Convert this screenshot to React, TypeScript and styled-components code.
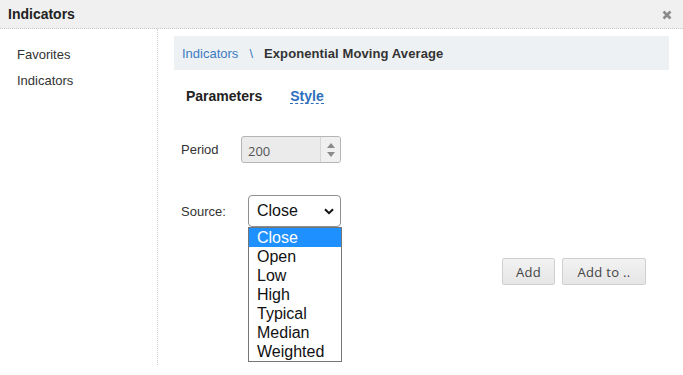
import React from "react";
import styled, { createGlobalStyle } from "styled-components";

const Global = createGlobalStyle`
  html, body { margin: 0; padding: 0; background: #fff; }
  body { font-family: "Liberation Sans", Arial, sans-serif; color: #333; }
`;

const Dialog = styled.div`
  width: 683px;
  height: 375px;
  background: #fff;
  display: flex;
  flex-direction: column;
  overflow: hidden;
`;

const Header = styled.div`
  height: 29px;
  box-sizing: border-box;
  background: #f0f0f0;
  border-bottom: 1px dotted #c8c8c8;
  display: flex;
  align-items: center;
  justify-content: space-between;
  padding: 0 11px 0 8px;
`;

const Title = styled.div`
  font-size: 14px;
  font-weight: bold;
  color: #222;
`;

const CloseBtn = styled.svg`
  width: 10px;
  height: 10px;
  margin-top: 1px;
`;

const Body = styled.div`
  flex: 1;
  display: flex;
`;

const Sidebar = styled.div`
  width: 158px;
  box-sizing: border-box;
  border-right: 1px dotted #cfcfcf;
  padding: 18px 0 0 17px;
  margin-bottom: 10px;
  display: flex;
  flex-direction: column;
  gap: 11px;
`;

const NavItem = styled.div`
  font-size: 13px;
  line-height: 15px;
  color: #333;
`;

const Main = styled.div`
  flex: 1;
  padding: 7px 14px 0 16px;
  display: flex;
  flex-direction: column;
`;

const Breadcrumb = styled.div`
  height: 34px;
  background: #eef1f4;
  display: flex;
  align-items: center;
  padding-left: 8px;
  font-size: 13px;
`;

const Crumb = styled.span`
  color: #3a7bc2;
`;

const Sep = styled.span`
  color: #3a7bc2;
  margin: 0 11px 0 11px;
`;

const Current = styled.span`
  color: #333;
  font-weight: bold;
  letter-spacing: 0.1px;
`;

const Tabs = styled.div`
  display: flex;
  gap: 28px;
  padding: 19px 0 0 12px;
  height: 15px;
`;

const Tab = styled.span<{ $active?: boolean }>`
  font-size: 14px;
  line-height: 15px;
  font-weight: bold;
  color: ${(p) => (p.$active ? "#2e6fbd" : "#222")};
  border-bottom: ${(p) => (p.$active ? "1px dashed #2e6fbd" : "none")};
  padding-bottom: ${(p) => (p.$active ? "1px" : "0")};
`;

const Row = styled.div<{ $top: number }>`
  display: flex;
  align-items: center;
  padding-left: 7px;
  margin-top: ${(p) => p.$top}px;
`;

const Label = styled.div<{ $w: number }>`
  width: ${(p) => p.$w}px;
  font-size: 13px;
  color: #333;
`;

const NumberBox = styled.div`
  width: 100px;
  height: 27px;
  box-sizing: border-box;
  border: 1px solid #b5b5b5;
  border-radius: 3px;
  background: #ebebeb;
  display: flex;
  align-items: center;
  overflow: hidden;
`;

const NumberValue = styled.div`
  flex: 1;
  padding-left: 6px;
  font-family: "Open Sans", sans-serif;
  font-size: 13px;
  color: #555;
  padding-top: 2px;
`;

const Spinner = styled.div`
  width: 19px;
  height: 100%;
  border-left: 1px solid #d6d6d6;
  background: #f0f0f0;
  display: flex;
  flex-direction: column;
  align-items: center;
  justify-content: center;
  gap: 4px;
`;

const Arrow = styled.div<{ $up?: boolean }>`
  width: 0;
  height: 0;
  border-left: 4px solid transparent;
  border-right: 4px solid transparent;
  ${(p) =>
    p.$up ? "border-bottom: 5px solid #8a8a8a;" : "border-top: 5px solid #8a8a8a;"}
`;

const SelectWrap = styled.div`
  position: relative;
`;

const SelectBox = styled.div`
  width: 93px;
  height: 32px;
  box-sizing: border-box;
  border: 1px solid #8f8f8f;
  border-radius: 4px;
  background: #fff;
  display: flex;
  align-items: center;
  justify-content: space-between;
  padding: 0 6px 0 8px;
  font-size: 16px;
  color: #111;
`;

const DropList = styled.ul`
  position: absolute;
  top: 32px;
  left: 0;
  width: 94px;
  margin: 0;
  padding: 0;
  list-style: none;
  box-sizing: border-box;
  border: 1px solid #767676;
  background: #fff;
  z-index: 5;
`;

const Option = styled.li<{ $sel?: boolean }>`
  height: 19px;
  line-height: 19px;
  font-size: 16px;
  padding-left: 8px;
  color: ${(p) => (p.$sel ? "#fff" : "#111")};
  background: ${(p) => (p.$sel ? "#1e90ff" : "transparent")};
`;

const Actions = styled.div`
  display: flex;
  justify-content: flex-end;
  gap: 7px;
  margin-top: 31px;
  padding-right: 23px;
`;

const Button = styled.button<{ $w: number }>`
  width: ${(p) => p.$w}px;
  height: 27px;
  border: 1px solid #d0d0d0;
  border-radius: 2px;
  background: linear-gradient(#f2f2f2, #e6e6e6);
  font-family: "Open Sans", sans-serif;
  font-size: 13px;
  color: #444;
  padding: 0;
  letter-spacing: 0.3px;
`;

const options = ["Close", "Open", "Low", "High", "Typical", "Median", "Weighted"];

export default function App() {
  return (
    <>
      <Global />
      <Dialog>
        <Header>
          <Title>Indicators</Title>
          <CloseBtn viewBox="0 0 10 10">
            <path d="M1.5 1.5 L8.5 8.5 M8.5 1.5 L1.5 8.5" stroke="#8a8a8a" strokeWidth="2.6" strokeLinecap="butt" />
          </CloseBtn>
        </Header>
        <Body>
          <Sidebar>
            <NavItem>Favorites</NavItem>
            <NavItem>Indicators</NavItem>
          </Sidebar>
          <Main>
            <Breadcrumb>
              <Crumb>Indicators</Crumb>
              <Sep>\</Sep>
              <Current>Exponential Moving Average</Current>
            </Breadcrumb>
            <Tabs>
              <Tab>Parameters</Tab>
              <Tab $active>Style</Tab>
            </Tabs>
            <Row $top={32}>
              <Label $w={60}>Period</Label>
              <NumberBox>
                <NumberValue>200</NumberValue>
                <Spinner>
                  <Arrow $up />
                  <Arrow />
                </Spinner>
              </NumberBox>
            </Row>
            <Row $top={32}>
              <Label $w={67}>Source:</Label>
              <SelectWrap>
                <SelectBox>
                  <span>Close</span>
                  <svg width="10" height="7" viewBox="0 0 10 7">
                    <path d="M1 1.2 L5 5.2 L9 1.2" fill="none" stroke="#111" strokeWidth="2" />
                  </svg>
                </SelectBox>
                <DropList>
                  {options.map((o, i) => (
                    <Option key={o} $sel={i === 0}>
                      {o}
                    </Option>
                  ))}
                </DropList>
              </SelectWrap>
            </Row>
            <Actions>
              <Button $w={53}>Add</Button>
              <Button $w={84}>Add to ..</Button>
            </Actions>
          </Main>
        </Body>
      </Dialog>
    </>
  );
}
